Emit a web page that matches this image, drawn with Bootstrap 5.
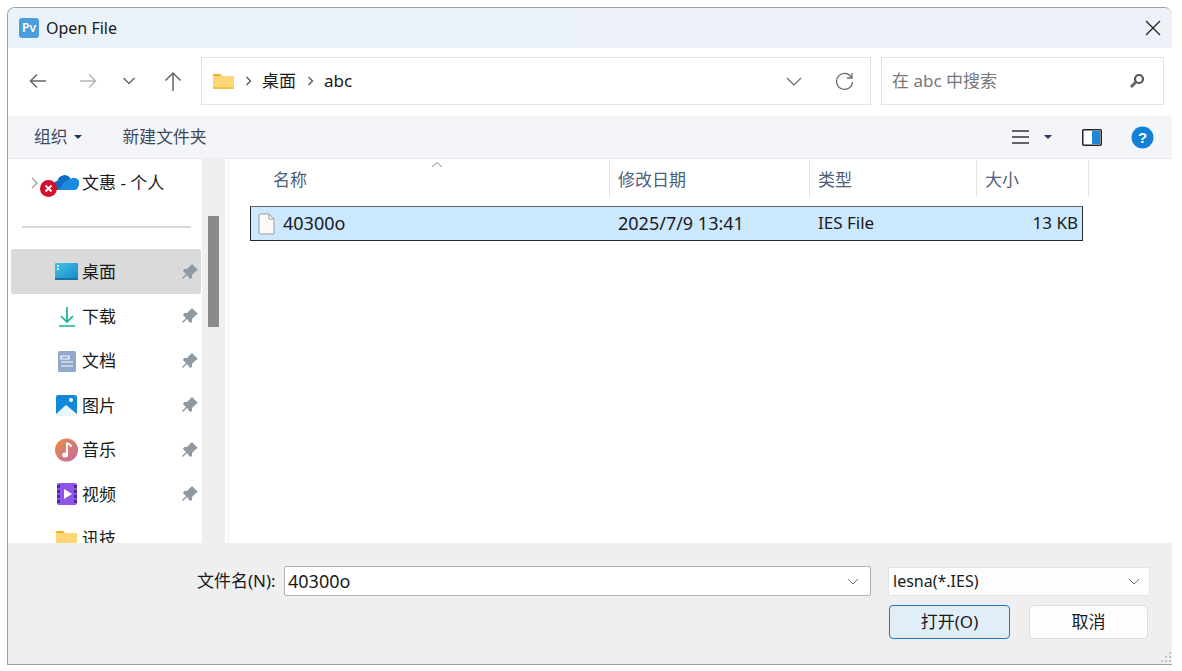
<!DOCTYPE html>
<html lang="zh-CN">
<head>
<meta charset="UTF-8" />
<title>Open File</title>
<link href="https://cdn.jsdelivr.net/npm/bootstrap@5.3.1/dist/css/bootstrap.min.css" rel="stylesheet" />
<style>
  html, body { height: 671px; overflow: hidden; background: #fff; }
  body { padding: 7px 10px 6px 7px; font-family: "Noto Sans", "Noto Sans CJK SC", sans-serif; font-size: 17px; color: #1a1a1a; }
  .win { width: 1165px; height: 658px; border: 1px solid #a0a0a0; border-right: 0; border-radius: 8px 8px 0 0; background: #fff; overflow: hidden; }
  .title-bar { height: 40px; background: linear-gradient(90deg, #eaf3f9, #eef1f8); padding-left: 11px; font-size: 16px; }
  .app-ico { width: 20px; height: 20px; border-radius: 3px; background: #4a9edb; color: #fff; font-size: 12px; font-weight: 600; line-height: 20px; text-align: center; margin-right: 7px; }
  .close-x { margin-left: auto; margin-right: 11px; }
  .nav-row { height: 68px; padding: 9px 8px 11px 21px; }
  .nav-ico { width: 18px; flex: none; }
  .fwd-ico { margin-left: 32px; }
  .recent-ico { margin-left: 25px; }
  .up-ico { margin-left: 28px; }
  .addr { width: 670px; height: 48px; margin-left: 19px; border: 1px solid #e3e3e3; padding: 0 16px 0 11px; }
  .crumb-sep { margin-left: 11px; }
  .crumb { margin-left: 10px; }
  .refresh-ico { margin-left: 33px; }
  .search { width: 283px; height: 48px; margin-left: 10px; border: 1px solid #e3e3e3; padding: 0 18px 0 10px; color: #777; }
  .tool-row { height: 43px; background: #f4f5f8; border-bottom: 1px solid #ebebeb; padding: 0 18px 0 26px; color: #3a4a5e; font-size: 16.8px; }
  .caret-d { width: 0; height: 0; border-left: 4px solid transparent; border-right: 4px solid transparent; border-top: 4px solid #1f3556; }
  .org-caret { margin-left: 6px; }
  .new-folder { margin-left: 41px; }
  .lines-ico { margin-left: auto; margin-right: 15px; }
  .view-pane { margin-left: 30px; }
  .help-ico { margin-left: 29px; }
  .body-row { height: 384px; }
  .side { width: 194px; padding: 0 1px 0 3px; overflow: hidden; }
  .cloud-row { height: 46px; margin-bottom: 21px; padding: 2px 0 0 20px; flex: none; }
  .cloud-ico { margin-left: 1px; margin-right: 3px; flex: none; }
  .rule { height: 2px; background: #d9d9d9; margin: 0 10px 21px 11px; flex: none; }
  .side-item { height: 44.5px; flex: none; padding: 1px 3px 0 44px; }
  .side-item.sel { background: #dadada; border-radius: 2px; }
  .side-item svg.ico { width: 24px; height: 24px; margin-right: 3px; flex: none; }
  .pin-ico { margin-left: auto; flex: none; }
  .scroll-track { width: 23px; background: #efefef; padding: 57px 6px 0; flex: none; }
  .scroll-thumb { height: 111px; background: #8a8a8a; }
  .gap-line { width: 3px; flex: none; }
  .list-pane { flex: 1; border-left: 1px solid #f0f0f0; min-width: 0; }
  .head-row { height: 39px; color: #4c607a; }
  .hcell { height: 38px; padding: 4px 0 0 8px; border-right: 1px solid #e5e5e5; flex: none; position: relative; }
  .name-col { width: 381px; padding-left: 44px; }
  .date-col { width: 200px; }
  .type-col { width: 167px; }
  .size-col { width: 112px; }
  .sort-mark { position: absolute; top: 2px; left: 202px; }
  .file-row { width: 833px; height: 35px; margin: 8px 0 0 21px; background: #cce8ff; border: 1px solid #2b2b2b; border-top-color: #666; }
  .file-ico { margin-left: 7px; flex: none; }
  .f-name { margin-left: 8px; width: 335px; font-size: 18px; }
  .f-date { width: 200px; font-size: 18px; }
  .f-type { width: 150px; padding-bottom: 2px; }
  .f-size { width: 110px; text-align: right; padding-bottom: 2px; }
  .bottom { height: 121px; background: #efefef; padding: 23px 22px 0 189px; }
  .name-label { width: 87px; flex: none; white-space: nowrap; }
  .field { height: 30px; background: #fff; border: 1px solid #b0b0b0; border-radius: 2px; padding: 0 11px 0 3px; font-size: 18px; }
  .filter { height: 29px; background: #fdfdfd; border: 1px solid #e3e3e3; border-radius: 2px; width: 262px; padding: 0 9px 0 4px; margin-left: 17px; font-size: 16px; flex: none; }
  .btn-line { margin: 9px 2px 0 0; gap: 19px; }
  .dlg-btn { width: 119px; height: 34px; padding: 0; border-radius: 4px; font-size: 17px; color: #1a1a1a; background: #fdfdfd; border: 1px solid #dcdcdc; }
  .dlg-btn.primary-ish { width: 121px; background: #e0eef9; border-color: #1f78c1; }
  .grip { position: absolute; right: 0; bottom: 1px; }
</style>
</head>
<body>
<div class="win d-flex flex-column position-relative">
  <!-- title bar -->
  <div class="title-bar d-flex align-items-center">
    <span class="app-ico">Pv</span><span>Open File</span>
    <svg class="close-x" width="16" height="16" viewBox="0 0 16 16"><path d="M1 1l14 14M15 1L1 15" stroke="#222" stroke-width="1.3" fill="none"/></svg>
  </div>

  <!-- back / forward / address / search -->
  <div class="nav-row d-flex align-items-center">
    <svg class="nav-ico" height="18" viewBox="0 0 18 18"><path d="M17 9H1.500M8 2.500L1.500 9 8 15.500" stroke="#666" stroke-width="1.500" fill="none"/></svg>
    <svg class="nav-ico fwd-ico" height="18" viewBox="0 0 18 18"><path d="M1 9h15.500M10 2.500L16.500 9 10 15.500" stroke="#b5b5b5" stroke-width="1.500" fill="none"/></svg>
    <svg class="recent-ico" width="14" height="10" viewBox="0 0 14 10"><path d="M1.500 2l5.500 5.500L12.500 2" stroke="#666" stroke-width="1.500" fill="none"/></svg>
    <svg class="nav-ico up-ico" height="20" viewBox="0 0 18 20"><path d="M9 20V2M1.500 9.500L9 2l7.500 7.500" stroke="#666" stroke-width="1.500" fill="none"/></svg>
    <div class="addr d-flex align-items-center">
      <svg width="21" height="17" viewBox="0 0 21 17"><path d="M0 2a1 1 0 011-1h6l2 2H0z" fill="#f2b01e"/><rect y="3" width="21" height="13" rx="1" fill="#fdd776"/><rect y="14" width="21" height="2" fill="#f5c242"/></svg>
      <svg class="crumb-sep" width="7" height="10" viewBox="0 0 7 10"><path d="M1.500 1l4 4-4 4" stroke="#555" stroke-width="1.300" fill="none"/></svg>
      <span class="crumb">桌面</span>
      <svg class="crumb-sep" width="7" height="10" viewBox="0 0 7 10"><path d="M1.500 1l4 4-4 4" stroke="#555" stroke-width="1.300" fill="none"/></svg>
      <span class="crumb">abc</span>
      <svg class="ms-auto" width="16" height="9" viewBox="0 0 16 9"><path d="M1 1l7 7 7-7" stroke="#666" stroke-width="1.200" fill="none"/></svg>
      <svg class="refresh-ico" width="19" height="19" viewBox="0 0 19 19"><path d="M16.500 5.500A8 8 0 1017.500 10" stroke="#666" stroke-width="1.300" fill="none"/><path d="M17 1v5h-5" stroke="#666" stroke-width="1.300" fill="none"/></svg>
    </div>
    <div class="search d-flex align-items-center">
      <span>在 abc 中搜索</span>
      <svg class="ms-auto" width="16" height="16" viewBox="0 0 16 16"><circle cx="10" cy="6" r="4" stroke="#555" stroke-width="2.200" fill="none"/><path d="M7 9l-5 5" stroke="#666" stroke-width="3"/></svg>
    </div>
  </div>

  <!-- organize toolbar -->
  <div class="tool-row d-flex align-items-center">
    <span>组织</span><span class="caret-d org-caret"></span>
    <span class="new-folder">新建文件夹</span>
    <svg class="lines-ico" width="17" height="16" viewBox="0 0 17 16"><path d="M0 2h17M0 8h17M0 14h17" stroke="#333" stroke-width="1.300"/></svg>
    <span class="caret-d"></span>
    <svg class="view-pane" width="20" height="17" viewBox="0 0 20 17"><rect x=".75" y=".75" width="18.500" height="15.500" rx="1" fill="#fff" stroke="#222" stroke-width="1.500"/><rect x="10" y="2" width="8" height="13" fill="#1e88d4"/></svg>
    <svg class="help-ico" width="23" height="23" viewBox="0 0 23 23"><circle cx="11.500" cy="11.500" r="11" fill="#1480d8"/><text x="11.500" y="17" text-anchor="middle" font-size="15" font-weight="700" fill="#fff" font-family="Liberation Sans, sans-serif">?</text></svg>
  </div>

  <!-- sidebar + file list -->
  <div class="body-row d-flex">
    <div class="side d-flex flex-column">
      <div class="cloud-row d-flex align-items-center">
        <svg width="7" height="12" viewBox="0 0 7 12"><path d="M1 1l5 5-5 5" stroke="#999" stroke-width="1.200" fill="none"/></svg>
        <svg class="cloud-ico" width="40" height="30" viewBox="0 0 40 30"><path d="M19 22a4.500 4.500 0 01-.5-9 7 7 0 0113-2 5.500 5.500 0 017.500 8 3.500 3.500 0 01-3 3z" fill="#1c8ae0"/><path d="M19 22a4.500 4.500 0 01-.5-9 7 7 0 0113-2c-5 0-7 4-12 11z" fill="#0f6cc0"/><circle cx="9.500" cy="20.500" r="8.500" fill="#d40f2b"/><path d="M6.500 17.500l6 6M12.500 17.500l-6 6" stroke="#fff" stroke-width="2"/></svg>
        <span>文惠 - 个人</span>
      </div>
      <div class="rule"></div>
      <div class="side-item sel d-flex align-items-center">
        <svg class="ico" viewBox="0 0 24 24"><defs><linearGradient id="desk" x1="0" y1="0" x2="1" y2="1"><stop offset="0" stop-color="#3fc4ea"/><stop offset="1" stop-color="#1a86c6"/></linearGradient></defs><rect y="3" width="23" height="17" rx="1" fill="url(#desk)"/><rect y="18" width="23" height="2" fill="#1a72a8"/><path d="M2 6h2M2 9h2" stroke="#fff" stroke-width="1.500"/></svg>
        <span>桌面</span>
        <svg class="pin-ico" width="16" height="16" viewBox="0 0 16 16"><path d="M10 0l6 6-2 1-4 4 0 3-2 1-3-4-4 4-1-1 4-4-3-3 1-2 3 0 4-4z" fill="#8e99a4"/></svg>
      </div>
      <div class="side-item d-flex align-items-center">
        <svg class="ico" viewBox="0 0 24 24"><path d="M12 3v14M6 12l6 6 6-6M4 22h16" stroke="#14b394" stroke-width="1.700" fill="none"/></svg>
        <span>下载</span>
        <svg class="pin-ico" width="16" height="16" viewBox="0 0 16 16"><path d="M10 0l6 6-2 1-4 4 0 3-2 1-3-4-4 4-1-1 4-4-3-3 1-2 3 0 4-4z" fill="#8e99a4"/></svg>
      </div>
      <div class="side-item d-flex align-items-center">
        <svg class="ico" viewBox="0 0 24 24"><rect x="3" y="2" width="18" height="21" rx="1.500" fill="#8ea9c9"/><path d="M6 7h8v3H6zM6 13h12M6 17h12" stroke="#fff" stroke-width="1.200" fill="none"/></svg>
        <span>文档</span>
        <svg class="pin-ico" width="16" height="16" viewBox="0 0 16 16"><path d="M10 0l6 6-2 1-4 4 0 3-2 1-3-4-4 4-1-1 4-4-3-3 1-2 3 0 4-4z" fill="#8e99a4"/></svg>
      </div>
      <div class="side-item d-flex align-items-center">
        <svg class="ico" viewBox="0 0 24 24"><rect x="1" y="2" width="21" height="21" rx="2" fill="#1488d8"/><path d="M1 21l10-9 11 9v2H1z" fill="#eaf5fb"/><circle cx="16" cy="7" r="2" fill="#fff"/></svg>
        <span>图片</span>
        <svg class="pin-ico" width="16" height="16" viewBox="0 0 16 16"><path d="M10 0l6 6-2 1-4 4 0 3-2 1-3-4-4 4-1-1 4-4-3-3 1-2 3 0 4-4z" fill="#8e99a4"/></svg>
      </div>
      <div class="side-item d-flex align-items-center">
        <svg class="ico" viewBox="0 0 24 24"><defs><linearGradient id="mus" x1="0" y1="0" x2="1" y2="1"><stop offset="0" stop-color="#ef8d3f"/><stop offset="1" stop-color="#bf6ba8"/></linearGradient></defs><circle cx="11.500" cy="12" r="11.500" fill="url(#mus)"/><ellipse cx="10" cy="17" rx="3" ry="2.500" fill="#fff"/><path d="M12 17V5.500c2 0 4 1.500 4 3.500" stroke="#fff" stroke-width="2" fill="none"/></svg>
        <span>音乐</span>
        <svg class="pin-ico" width="16" height="16" viewBox="0 0 16 16"><path d="M10 0l6 6-2 1-4 4 0 3-2 1-3-4-4 4-1-1 4-4-3-3 1-2 3 0 4-4z" fill="#8e99a4"/></svg>
      </div>
      <div class="side-item d-flex align-items-center">
        <svg class="ico" viewBox="0 0 24 24"><rect x="2" y="1" width="20" height="22" rx="2" fill="#8f55ea"/><path d="M2 3h3v3H2zM2 8h3v3H2zM2 13h3v3H2zM2 18h3v3H2zM19 3h3v3h-3zM19 8h3v3h-3zM19 13h3v3h-3zM19 18h3v3h-3z" fill="#4a2a96"/><path d="M9 7l8 5-8 5z" fill="#fff"/></svg>
        <span>视频</span>
        <svg class="pin-ico" width="16" height="16" viewBox="0 0 16 16"><path d="M10 0l6 6-2 1-4 4 0 3-2 1-3-4-4 4-1-1 4-4-3-3 1-2 3 0 4-4z" fill="#8e99a4"/></svg>
      </div>
      <div class="side-item d-flex align-items-center">
        <svg class="ico" viewBox="0 0 24 24"><path d="M1 5a1 1 0 011-1h6l2 2H1z" fill="#f2b01e"/><rect x="1" y="6" width="21" height="15" rx="1" fill="#fdd776"/></svg>
        <span>讯技</span>
      </div>
    </div>
    <div class="scroll-track"><div class="scroll-thumb"></div></div>
    <div class="gap-line"></div>
    <div class="list-pane">
      <div class="head-row d-flex">
        <div class="hcell d-flex align-items-center name-col">名称
          <svg class="sort-mark" width="12" height="7" viewBox="0 0 12 7"><path d="M1 6l5-4.500L11 6" stroke="#888" stroke-width="1" fill="none"/></svg>
        </div>
        <div class="hcell d-flex align-items-center date-col">修改日期</div>
        <div class="hcell d-flex align-items-center type-col">类型</div>
        <div class="hcell d-flex align-items-center size-col">大小</div>
      </div>
      <div class="file-row d-flex align-items-center">
        <svg class="file-ico" width="17" height="22" viewBox="0 0 17 22"><path d="M1 2a1 1 0 011-1h9l5 5v14a1 1 0 01-1 1H2a1 1 0 01-1-1z" fill="#fafafa" stroke="#9a9a9a"/><path d="M11 1v5h5" fill="none" stroke="#9a9a9a"/></svg>
        <span class="f-name">40300o</span>
        <span class="f-date">2025/7/9 13:41</span>
        <span class="f-type">IES File</span>
        <span class="f-size">13 KB</span>
      </div>
    </div>
  </div>

  <!-- file name + buttons -->
  <div class="bottom">
    <div class="d-flex align-items-center">
      <span class="name-label">文件名(N):</span>
      <div class="field d-flex align-items-center flex-grow-1">
        <span>40300o</span>
        <svg class="ms-auto" width="12" height="7" viewBox="0 0 12 7"><path d="M1 1l5 5 5-5" stroke="#777" stroke-width="1" fill="none"/></svg>
      </div>
      <div class="filter d-flex align-items-center">
        <span>lesna(*.IES)</span>
        <svg class="ms-auto" width="12" height="7" viewBox="0 0 12 7"><path d="M1 1l5 5 5-5" stroke="#777" stroke-width="1" fill="none"/></svg>
      </div>
    </div>
    <div class="d-flex justify-content-end btn-line">
      <button type="button" class="btn dlg-btn primary-ish">打开(O)</button>
      <button type="button" class="btn dlg-btn">取消</button>
    </div>
  </div>
  <svg class="grip" width="12" height="12" viewBox="0 0 12 12"><path d="M9 1h2v2H9zM5 5h2v2H5zM9 5h2v2H9zM1 9h2v2H1zM5 9h2v2H5zM9 9h2v2H9z" fill="#c4c4c4"/></svg>
</div>
</body>
</html>
